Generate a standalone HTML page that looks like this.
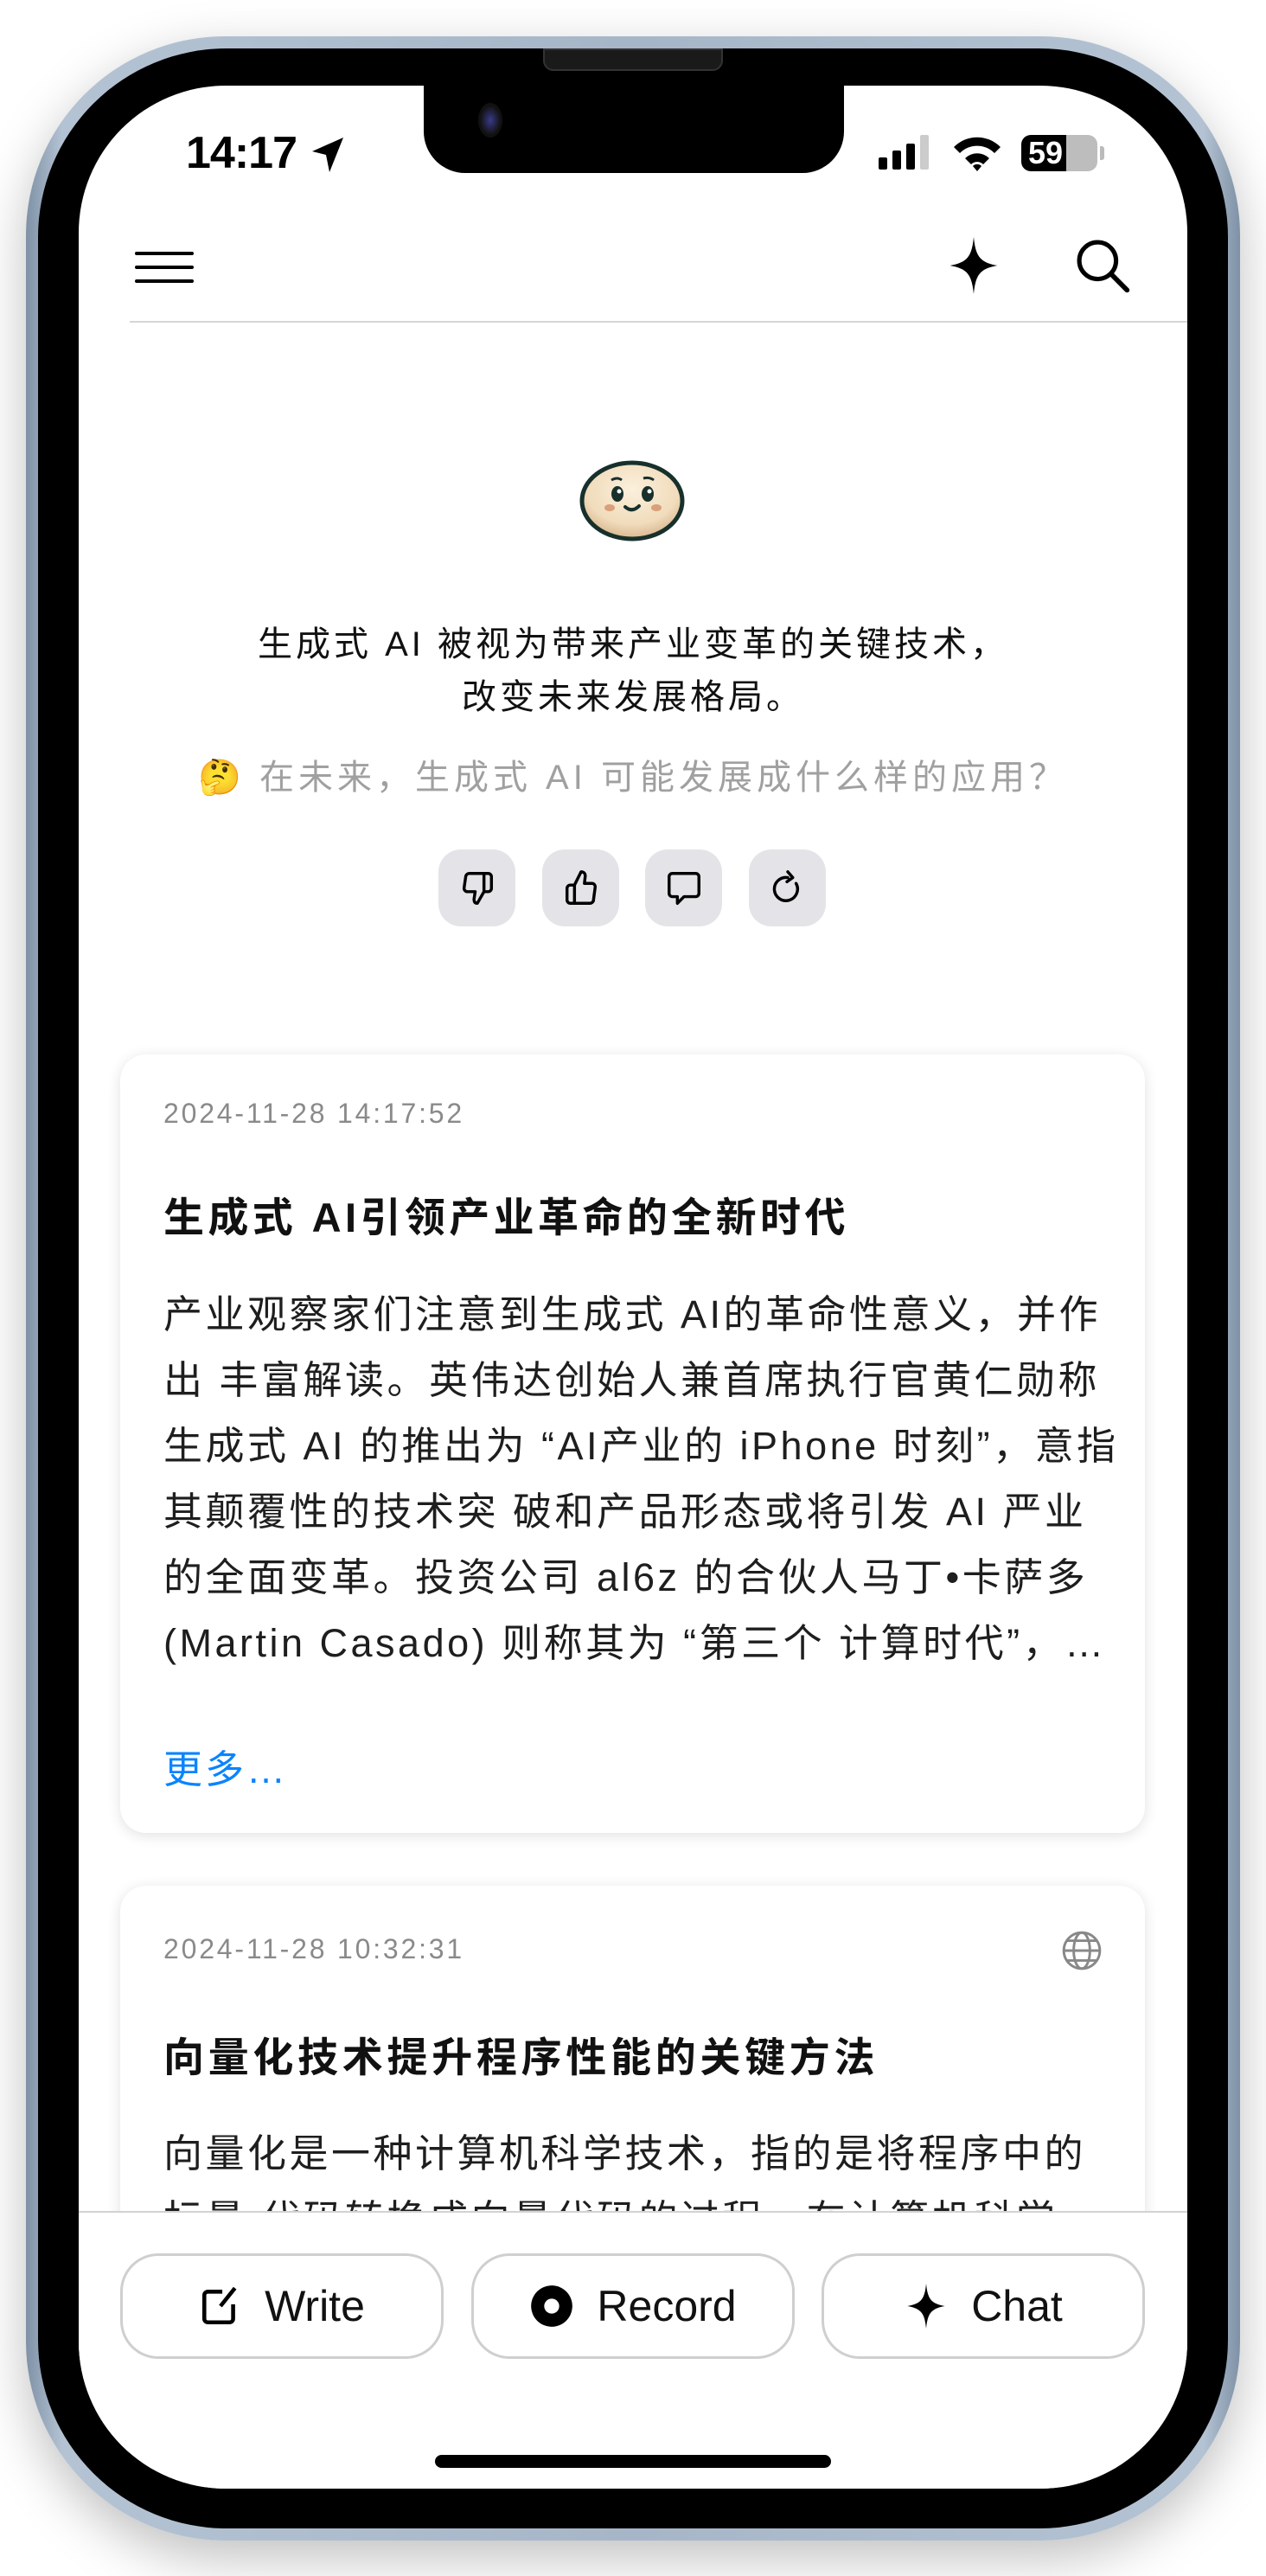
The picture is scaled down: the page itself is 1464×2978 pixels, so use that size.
<!DOCTYPE html>
<html><head><meta charset="utf-8">
<style>
*{margin:0;padding:0;box-sizing:border-box}
body{width:1464px;height:2978px;background:#fff;position:relative;overflow:hidden;font-family:"Liberation Sans","Noto Sans CJK SC",sans-serif}
.abs{position:absolute}
.frame{left:30px;top:42px;width:1404px;height:2895px;border-radius:230px;background:linear-gradient(90deg,#7f91a6,#b4c3d3 3%,#a6b6c8 50%,#b4c3d3 97%,#7f91a6);box-shadow:0 20px 60px rgba(0,0,0,.25)}
.bezel{left:44px;top:56px;width:1376px;height:2867px;border-radius:218px;background:#000}
.screen{left:91px;top:99px;width:1282px;height:2778px;border-radius:170px;background:#fff;overflow:hidden}
.notch{left:399px;top:-2px;width:486px;height:103px;background:#000;border-radius:0 0 48px 48px}
.txt{white-space:nowrap}
.btn4{width:89px;height:89px;border-radius:26px;background:#e4e4e8;top:883px;display:flex;align-items:center;justify-content:center}
.card{left:48px;width:1185px;background:#fff;border-radius:30px;box-shadow:0 3px 16px rgba(0,0,0,.12)}
.body{font-size:45px;color:#1e1e1e;line-height:76px;position:absolute;left:50px;letter-spacing:3.5px}
.bb{top:2506px;width:374px;height:122px;border:3px solid #cfcfcf;border-radius:44px;background:#fff;display:flex;align-items:center;justify-content:center;font-size:50px;color:#111;gap:26px}
</style></head><body>
<div class="abs frame"></div>
<div class="abs bezel"></div>
<div class="abs" style="left:628px;top:56px;width:208px;height:26px;background:#1a1a1a;border-radius:0 0 12px 12px;border:2px solid #333"></div>
<div class="abs screen">
  <div class="abs notch"></div>
  <div class="abs" style="left:462px;top:20px;width:28px;height:40px;border-radius:50%;background:radial-gradient(#3a3a8a,#111 60%)"></div>
  <div class="abs txt" style="left:124px;top:48px;font-size:52px;font-weight:bold;color:#000;letter-spacing:-1px">14:17</div>
  <svg class="abs" style="left:268px;top:58px" width="40" height="44" viewBox="0 0 20 22"><path d="M19 1 L1 9 L9 11 L11 21 Z" fill="#000"/></svg>
  <svg class="abs" style="left:925px;top:57px" width="62" height="40" viewBox="0 0 31 20"><rect x="0" y="13" width="5" height="7" rx="1"/><rect x="8" y="9" width="5" height="11" rx="1"/><rect x="16" y="5" width="5" height="15" rx="1"/><rect x="24" y="0" width="5" height="20" rx="1" fill="#ccc"/></svg>
  <svg class="abs" style="left:1010px;top:55px" width="58" height="44" viewBox="0 0 29 22"><path d="M1 8 A19 19 0 0 1 28 8 L24.5 11.5 A14 14 0 0 0 4.5 11.5 Z M7.5 14.5 A10 10 0 0 1 21.5 14.5 L18 18 A5 5 0 0 0 11 18 Z M12 19 L14.5 22 L17 19 A3.5 3.5 0 0 0 12 19Z" fill="#000"/></svg>
  <div class="abs" style="left:1090px;top:57px;width:88px;height:42px;border-radius:11px;background:linear-gradient(90deg,#000 59%,#bdbdbd 59%)"></div>
  <div class="abs txt" style="left:1098px;top:57px;font-size:36px;font-weight:bold;color:#fff;line-height:42px">59</div>
  <div class="abs" style="left:1181px;top:70px;width:5px;height:16px;border-radius:0 3px 3px 0;background:#bbb"></div>
  <svg class="abs" style="left:65px;top:190px" width="68" height="40" viewBox="0 0 68 40"><path d="M2 4H66M2 20H66M2 36H66" stroke="#000" stroke-width="4" stroke-linecap="round"/></svg>
  <svg class="abs" style="left:1002px;top:174px" width="66" height="68" viewBox="0 0 24 24"><path d="M12 0 C12.8 8 14.5 10.7 22 12 C14.5 13.3 12.8 16 12 24 C11.2 16 9.5 13.3 2 12 C9.5 10.7 11.2 8 12 0Z" fill="#000"/></svg>
  <svg class="abs" style="left:1150px;top:174px" width="68" height="68" viewBox="0 0 24 24"><circle cx="10" cy="10" r="7.5" fill="none" stroke="#000" stroke-width="1.8"/><path d="M15.5 15.5 L22 22" stroke="#000" stroke-width="2" stroke-linecap="round"/></svg>
  <div class="abs" style="left:59px;top:272px;width:1223px;height:2px;background:#d6d6d6"></div>
  <svg class="abs" style="left:578px;top:432px" width="124" height="96" viewBox="0 0 124 96"><defs><radialGradient id="g" cx="50%" cy="35%" r="65%"><stop offset="0" stop-color="#fbf0dc"/><stop offset=".7" stop-color="#f1dcbc"/><stop offset="1" stop-color="#d9b68e"/></radialGradient></defs><ellipse cx="62" cy="48" rx="58" ry="44" fill="url(#g)" stroke="#17302c" stroke-width="5"/><ellipse cx="45" cy="40" rx="7" ry="9" fill="#17302c"/><ellipse cx="80" cy="40" rx="7" ry="9" fill="#17302c"/><circle cx="47" cy="37" r="2.5" fill="#fff"/><circle cx="82" cy="37" r="2.5" fill="#fff"/><path d="M54 55 Q62 62 70 54" stroke="#17302c" stroke-width="4" fill="none" stroke-linecap="round"/><ellipse cx="36" cy="56" rx="6" ry="4" fill="#d9a07a"/><ellipse cx="90" cy="56" rx="6" ry="4" fill="#d9a07a"/><path d="M38 24 Q45 20 50 24 M75 22 Q82 20 87 24" stroke="#17302c" stroke-width="3" fill="none"/></svg>
  <div class="abs txt" style="left:0;width:1282px;text-align:center;top:616px;font-size:40px;line-height:61px;color:#111;letter-spacing:4px">生成式 AI 被视为带来产业变革的关键技术，<br>改变未来发展格局。</div>
  <div class="abs txt" style="left:0;width:1282px;text-align:center;top:770px;font-size:40px;line-height:61px;color:#a0a0a0;letter-spacing:5px">🤔 在未来，生成式 AI 可能发展成什么样的应用？</div>
  <div class="abs btn4" style="left:416px"><svg width="46" height="46" viewBox="0 0 24 24" fill="none" stroke="#000" stroke-width="1.8" stroke-linejoin="round"><path d="M16 3v11M16 3h2.5a2 2 0 0 1 2 2v7a2 2 0 0 1-2 2H16l-4 7c-1.5 0-2-1-2-2.5l.7-4.5H6a2 2 0 0 1-2-2.2l1-7A2.2 2.2 0 0 1 7 3Z"/></svg></div>
  <div class="abs btn4" style="left:536px"><svg width="46" height="46" viewBox="0 0 24 24" fill="none" stroke="#000" stroke-width="1.8" stroke-linejoin="round"><path d="M8 10v11M8 10h-2.5a2 2 0 0 0-2 2v7a2 2 0 0 0 2 2H8M8 10l4-8c1.5 0 2.5 1 2.5 2.5L14 9h4.5a2 2 0 0 1 2 2.2l-1 7.5A2.2 2.2 0 0 1 17.3 21H8"/></svg></div>
  <div class="abs btn4" style="left:655px"><svg width="46" height="46" viewBox="0 0 24 24" fill="none" stroke="#000" stroke-width="1.8" stroke-linejoin="round"><path d="M5 3h14a2 2 0 0 1 2 2v10a2 2 0 0 1-2 2h-7l-4 4v-4H5a2 2 0 0 1-2-2V5a2 2 0 0 1 2-2z"/></svg></div>
  <div class="abs btn4" style="left:775px"><svg width="46" height="46" viewBox="0 0 24 24" fill="none" stroke="#000" stroke-width="1.8" stroke-linecap="round" stroke-linejoin="round"><path d="M17 9a7 7 0 1 1-5-3.5M12 2l3 3.5-3.5 2.5"/></svg></div>
  <div class="abs card" style="top:1120px;height:900px">
    <div class="abs txt" style="left:50px;top:50px;font-size:32px;color:#8a8a8a;letter-spacing:2.8px">2024-11-28 14:17:52</div>
    <div class="abs txt" style="left:50px;top:150px;font-size:47px;font-weight:bold;color:#111;letter-spacing:4.4px">生成式 AI引领产业革命的全新时代</div>
    <div class="body txt" style="top:263px">产业观察家们注意到生成式 AI的革命性意义，并作<br>出 丰富解读。英伟达创始人兼首席执行官黄仁勋称<br>生成式 AI 的推出为 “AI产业的 iPhone 时刻”，意指<br>其颠覆性的技术突 破和产品形态或将引发 AI 严业<br>的全面变革。投资公司 al6z 的合伙人马丁•卡萨多<br>(Martin Casado) 则称其为 “第三个 计算时代”，…</div>
    <div class="abs txt" style="left:50px;top:790px;font-size:45px;color:#0a84ff;letter-spacing:3px">更多…</div>
  </div>
  <div class="abs card" style="top:2081px;height:600px">
    <div class="abs txt" style="left:50px;top:55px;font-size:32px;color:#8a8a8a;letter-spacing:2.8px">2024-11-28 10:32:31</div>
    <svg class="abs" style="left:1087px;top:50px" width="50" height="50" viewBox="0 0 24 24" fill="none" stroke="#888" stroke-width="1.4"><circle cx="12" cy="12" r="10"/><ellipse cx="12" cy="12" rx="4.5" ry="10"/><path d="M2 12h20M4 6.5h16M4 17.5h16"/></svg>
    <div class="abs txt" style="left:50px;top:160px;font-size:47px;font-weight:bold;color:#111;letter-spacing:4.7px">向量化技术提升程序性能的关键方法</div>
    <div class="body txt" style="top:272px">向量化是一种计算机科学技术，指的是将程序中的<br>标量 代码转换成向量代码的过程。在计算机科学</div>
  </div>
  <div class="abs" style="left:0;top:2457px;width:1282px;height:330px;background:#fff;border-top:2px solid #d2d2d2"></div>
  <div class="abs bb" style="left:48px"><svg width="50" height="50" viewBox="0 0 24 24" fill="none" stroke="#000" stroke-width="2.2" stroke-linejoin="round"><path d="M13 4H5a2 2 0 0 0-2 2v13a2 2 0 0 0 2 2h12a2 2 0 0 0 2-2v-8"/><path d="M20 2 12 12"/></svg>Write</div>
  <div class="abs bb" style="left:454px"><svg width="52" height="52" viewBox="0 0 24 24"><circle cx="12" cy="12" r="11" fill="#000"/><circle cx="12" cy="12" r="4" fill="#fff"/></svg>Record</div>
  <div class="abs bb" style="left:859px"><svg width="52" height="56" viewBox="0 0 24 24"><path d="M12 0 C12.8 8 14.5 10.7 22 12 C14.5 13.3 12.8 16 12 24 C11.2 16 9.5 13.3 2 12 C9.5 10.7 11.2 8 12 0Z" fill="#000"/></svg>Chat</div>
  <div class="abs" style="left:412px;top:2739px;width:458px;height:15px;border-radius:8px;background:#000"></div>
</div>
</body></html>
